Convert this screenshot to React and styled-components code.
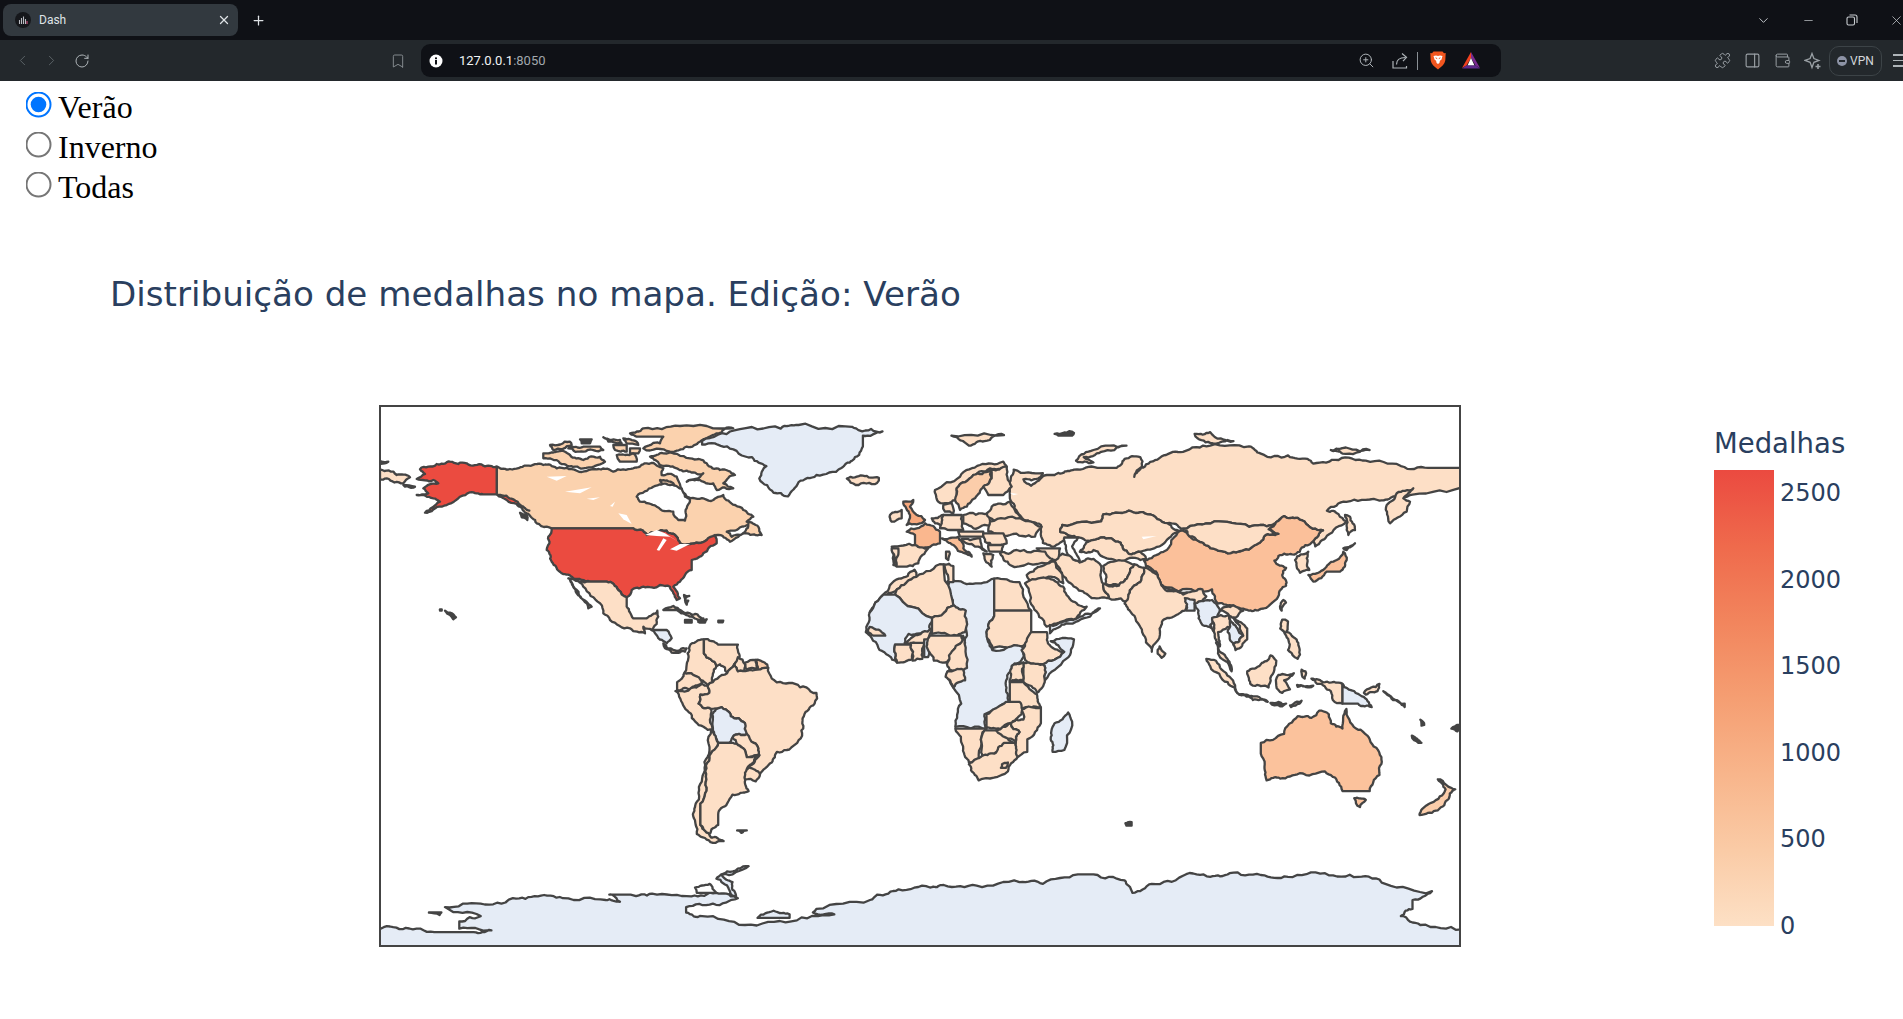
import styled, { createGlobalStyle } from 'styled-components';
import {
  Bookmark,
  ChevronDown,
  ChevronLeft,
  ChevronRight,
  Minus,
  PanelRight,
  Plus,
  Puzzle,
  RotateCw,
  Wallet,
  X,
  ZoomIn,
} from 'lucide-react';

const GlobalStyle = createGlobalStyle`
  html, body {
    margin: 0;
    padding: 0;
    background: #fff;
    overflow: hidden;
  }
  body {
    height: 1019px;
  }
`;

/* ---------- browser chrome ---------- */

const TabStrip = styled.div`
  display: flex;
  align-items: center;
  height: 40px;
  padding: 0 0 0 3px;
  background: #0f1116;
  color: #dfe3e6;
  overflow: hidden;
`;

const Tab = styled.div`
  display: flex;
  align-items: center;
  width: 235px;
  height: 32px;
  box-sizing: border-box;
  padding: 0 7px 0 12px;
  border-radius: 8px;
  background: #32393f;
  font: 12px Roboto, 'Liberation Sans', sans-serif;
`;

const TabTitle = styled.span`
  flex: 1;
  margin-left: 8px;
`;

const NewTab = styled.div`
  display: flex;
  margin-left: 13px;
`;

const WindowControls = styled.div`
  display: flex;
  align-items: center;
  gap: 31px;
  margin: 0 -1px 0 auto;
  color: #c8ccd0;
`;

const Toolbar = styled.div`
  display: flex;
  align-items: center;
  height: 41px;
  padding: 0 0 0 14px;
  background: #23282c;
  color: #aeb4b8;
  overflow: hidden;
`;

const NavGroup = styled.div`
  display: flex;
  flex: none;
  align-items: center;
  gap: 12px;
  width: 376px;
  color: #5f666b;
`;

const Reload = styled.span`
  display: flex;
  margin-left: 2px;
  color: #aeb4b8;
`;

const BookmarkSlot = styled.div`
  display: flex;
  flex: none;
  width: 31px;
  color: #8a9095;
`;

const UrlBar = styled.div`
  display: flex;
  flex: none;
  align-items: center;
  width: 1080px;
  height: 33px;
  box-sizing: border-box;
  padding: 0 21px 0 8px;
  border-radius: 9px;
  background: #0f1116;
  font: 13px Roboto, 'Liberation Sans', sans-serif;
`;

const UrlHost = styled.span`
  margin-left: 16px;
  color: #f2f4f5;
`;

const UrlPort = styled.span`
  color: #a2a8ad;
`;

const UrlActions = styled.div`
  display: flex;
  align-items: center;
  gap: 16px;
  margin-left: auto;
  color: #aeb4b8;
`;

const Divider = styled.span`
  width: 1px;
  height: 18px;
  margin: 0 -4px 0 -8px;
  background: #8a9095;
`;

const Extensions = styled.div`
  display: flex;
  flex: none;
  align-items: center;
  gap: 13px;
  margin-left: 213px;
  color: #9aa0a5;
`;

const VpnPill = styled.div`
  display: flex;
  align-items: center;
  gap: 3px;
  width: 53px;
  height: 30px;
  box-sizing: border-box;
  margin-left: -6px;
  padding-left: 7px;
  border: 1px solid #3c4347;
  border-radius: 10px;
  color: #d3d7da;
  font: 12px Roboto, 'Liberation Sans', sans-serif;
`;

const VpnDot = styled.span`
  position: relative;
  width: 10px;
  height: 10px;
  border-radius: 50%;
  background: #8d93a6;
  &::after {
    content: '';
    position: absolute;
    left: 2px;
    right: 2px;
    top: 4px;
    height: 2px;
    background: #23282c;
  }
`;

const Burger = styled.div`
  display: flex;
  flex-direction: column;
  gap: 4px;
  width: 14px;
  margin-left: -2px;
  span {
    height: 1.5px;
    background: #aeb4b8;
  }
`;

const DashIcon = () => (
  <svg width="16" height="16" viewBox="0 0 16 16">
    <circle cx="8" cy="8" r="8" fill="#15171b" />
    <path d="M4.5 8v4M6.5 6v6M8.5 4.5V12M10.5 7v5" stroke="#b9bcc2" strokeWidth="1.1" />
    <path d="M12 9v3" stroke="#d0517c" strokeWidth="1.1" />
  </svg>
);

const InfoIcon = () => (
  <svg width="14" height="14" viewBox="0 0 14 14">
    <circle cx="7" cy="7" r="6.5" fill="#fff" />
    <rect x="6" y="6" width="2" height="4.5" fill="#0f1116" />
    <rect x="6" y="3.4" width="2" height="1.8" fill="#0f1116" />
  </svg>
);

const ShareIcon = () => (
  <svg width="18" height="18" viewBox="0 0 18 18" fill="none" stroke="currentColor" strokeWidth="1.2">
    <path d="M2 9v7h13.5v-2" />
    <path d="M5.5 12.5c0-5 3-7 9-7" />
    <path d="M11 1.5l4.5 3.8-3.5 3.9" />
  </svg>
);

const BraveIcon = () => (
  <svg width="16" height="19" viewBox="0 0 16 19">
    <path d="M3.5 0.5h9l1.5 1.7 1.7-.3-.4 7.4c-.4 3.6-4.2 7-7.3 9.2-3.1-2.2-6.9-5.6-7.3-9.2L.3 1.9l1.7.3z" fill="#f1561f" />
    <path d="M3.5 5l2.5-.6 2 .6 2-.6 2.5.6-1 3.4-1.6 1.4-.5 2.2-1.4 1-1.4-1-.5-2.2-1.6-1.4z" fill="#fff" />
    <path d="M5.6 6.8l1.6.8M10.4 6.8l-1.6.8" stroke="#f1561f" strokeWidth="1" />
  </svg>
);

const BatIcon = () => (
  <svg width="18" height="17" viewBox="0 0 18 17">
    <path d="M9 0L0 16l4.5-2.6L9 6z" fill="#f1411f" />
    <path d="M9 0l9 16-4.5-2.6L9 6z" fill="#7a2b8f" />
    <path d="M0 16.5h18l-4.5-3.2h-9z" fill="#5f2a8c" />
    <path d="M9 6l-3.4 7.3h6.8z" fill="#fff" />
  </svg>
);

const SparkIcon = () => (
  <svg width="18" height="18" viewBox="0 0 18 18" fill="none" stroke="currentColor" strokeWidth="1.3">
    <path d="M8 1.5l1.9 5 5 1.9-5 1.9L8 15.5l-1.9-5.2-5-1.9 5-1.9z" />
    <path d="M14 12v5M11.5 14.5h5" strokeWidth="1.6" />
  </svg>
);

const BrowserChrome = () => (
  <header>
    <TabStrip>
      <Tab>
        <DashIcon />
        <TabTitle>Dash</TabTitle>
        <X size={14} strokeWidth={2.2} />
      </Tab>
      <NewTab>
        <Plus size={15} strokeWidth={2} />
      </NewTab>
      <WindowControls>
        <ChevronDown size={15} strokeWidth={1.5} />
        <Minus size={13} strokeWidth={1.3} />
        <svg width="12" height="12" viewBox="0 0 12 12" fill="none" stroke="currentColor" strokeWidth="1.1">
          <rect x="1" y="3" width="7.5" height="8" rx="1.5" />
          <path d="M3.5 1h5.5a2 2 0 0 1 2 2v6" />
        </svg>
        <X size={15} strokeWidth={1.2} />
      </WindowControls>
    </TabStrip>
    <Toolbar>
      <NavGroup>
        <ChevronLeft size={17} strokeWidth={1.3} />
        <ChevronRight size={17} strokeWidth={1.3} />
        <Reload>
          <RotateCw size={16} strokeWidth={1.5} />
        </Reload>
      </NavGroup>
      <BookmarkSlot>
        <Bookmark size={16} strokeWidth={1.4} />
      </BookmarkSlot>
      <UrlBar>
        <InfoIcon />
        <UrlHost>127.0.0.1</UrlHost>
        <UrlPort>:8050</UrlPort>
        <UrlActions>
          <ZoomIn size={17} strokeWidth={1.4} />
          <ShareIcon />
          <Divider />
          <BraveIcon />
          <BatIcon />
        </UrlActions>
      </UrlBar>
      <Extensions>
        <Puzzle size={17} strokeWidth={1.4} />
        <PanelRight size={17} strokeWidth={1.6} />
        <Wallet size={17} strokeWidth={1.4} />
        <SparkIcon />
        <VpnPill>
          <VpnDot />
          VPN
        </VpnPill>
        <Burger>
          <span />
          <span />
          <span />
        </Burger>
      </Extensions>
    </Toolbar>
  </header>
);

/* ---------- radio list ---------- */

const RadioList = styled.div`
  display: flex;
  flex-direction: column;
  padding: 6px 0 0 25px;
`;

const RadioRow = styled.label`
  display: flex;
  align-items: center;
  height: 40px;
  color: #000;
  font: 32px 'Liberation Serif', 'Times New Roman', serif;
`;

const RadioInput = styled.input`
  width: 13px;
  height: 13px;
  margin: -5px 13.5px 0 6.5px;
  transform: scale(2);
`;

/* ---------- map ---------- */

const NONE = '#e5ecf6';
const BASE = '#fddfc6';
const CANADA = '#fbd2ae';
const USA = '#eb4b40';
const CHINA = '#fbc09a';
const AUS = '#fbc29c';
const FRANCE = '#fab78e';
const UK = '#f7a87d';
const SWEDEN = '#fbcdaa';
const ITALY = '#f9bd96';

// the outlines were traced from crops of different scale
const frames = {
  w: [370, 400, 2.8, 2.8],
  e: [860, 400, 2.57, 2.8],
  na: [370, 400, 3, 3],
  eu: [860, 420, 3, 3],
  as: [1200, 420, 3, 3],
};

const noise = (x, y) => {
  const s = Math.sin(x * 12.9898 + y * 78.233) * 43758.5453;
  return s - Math.floor(s);
};

// coastlines are traced coarsely, so break up long edges the same way on both
// countries sharing them; ruler-straight borders (dx or dy = 0) stay straight
const roughen = (a, b, depth = 3) => {
  const len = Math.hypot(b[0] - a[0], b[1] - a[1]);
  if (depth === 0 || len < 3 || a[0] === b[0] || a[1] === b[1]) return [];
  const [p, q] = a[0] < b[0] || (a[0] === b[0] && a[1] < b[1]) ? [a, b] : [b, a];
  const mx = (p[0] + q[0]) / 2;
  const my = (p[1] + q[1]) / 2;
  const amp = Math.min(len * 0.16, 2.2) * (noise(mx, my) - 0.5) * 2;
  const m = [mx - ((q[1] - p[1]) / len) * amp, my + ((q[0] - p[0]) / len) * amp];
  return [...roughen(a, m, depth - 1), m, ...roughen(m, b, depth - 1)];
};

const toPage = (frame, pts) => {
  const [ox, oy, sx, sy] = frames[frame];
  return pts
    .trim()
    .split(/\s+/)
    .map((p) => {
      const [x, y] = p.split(',').map(Number);
      return [ox + x / sx, oy + y / sy];
    });
};

const toPoints = (list) =>
  list
    .flatMap((p, i) => [p, ...roughen(p, list[(i + 1) % list.length])])
    .map(([x, y]) => `${x.toFixed(1)},${y.toFixed(1)}`)
    .join(' ');

const project = (frame, pts) => toPoints(toPage(frame, pts));

const antarctica = toPoints([
  ...toPage('w', '30,1480 100,1478 180,1490 290,1490 340,1485 250,1480 250,1460 310,1445 210,1420 310,1410 400,1395 470,1390 540,1395 660,1400 700,1405 670,1385 730,1385 790,1382 900,1390 970,1380 1025,1390 1015,1350 985,1330 1060,1305 1000,1320 970,1340 1005,1370 1030,1395 960,1410 885,1420 885,1435 930,1445 1050,1470 1180,1460 1300,1440 1240,1435 1250,1425 1400,1400 1420,1385 1480,1370 1568,1365'),
  ...toPage('e', '215,1358 300,1360 410,1350 470,1355 560,1328 600,1328 680,1345 690,1360 700,1380 750,1355 830,1332 900,1335 950,1325 1030,1330 1100,1335 1195,1325 1280,1335 1350,1355 1470,1375 1420,1400 1420,1425 1390,1445 1440,1470 1545,1483 1560,1560'),
  ...toPage('w', '20,1560 20,1480'),
]);

const countries = [
  // North America
  ['na', CANADA, '380,200 420,207 470,197 520,195 560,205 620,212 680,208 730,215 790,205 830,190 880,205 875,225 920,230 950,290 975,295 1030,300 1060,285 1095,315 1120,330 1150,350 1130,365 1165,380 1175,405 1130,400 1080,425 1040,405 1010,420 960,432 930,430 920,410 890,392 830,405 790,385 545,385 530,380 500,370 470,340 440,310 380,283'],
  ['na', USA, '380,200 340,197 290,190 240,185 200,192 150,208 165,222 140,237 190,240 205,250 160,265 175,280 140,285 190,295 210,305 165,338 215,320 270,290 300,277 340,283 380,283'],
  ['na', USA, '385,285 430,298 478,332 440,312 410,300'],
  ['na', USA, '545,385 790,385 830,405 890,392 920,410 930,430 960,432 1010,420 1035,405 1040,430 1000,460 965,480 965,510 930,545 910,560 930,595 920,600 900,560 870,555 820,560 785,570 770,592 745,570 710,545 660,545 610,535 575,520 545,485 530,450 535,410'],
  ['na', BASE, '595,535 660,545 710,545 745,570 770,592 770,620 790,655 830,655 862,632 865,650 845,690 820,680 825,700 780,685 720,660 700,640 690,610 640,560 615,540'],
  ['na', BASE, '600,540 630,590 665,620 655,625 620,580'],
  ['na', NONE, '845,690 890,690 905,715 890,730 855,700'],
  ['na', BASE, '880,730 910,750 950,745 945,755 905,758 885,745'],
  ['na', BASE, '880,630 910,618 960,640 1000,655 960,650 920,630'],
  ['na', '#444', '945,660 965,660 965,668 945,668'],
  ['na', '#444', '985,660 1010,658 1005,668 985,666'],
  ['na', '#444', '1045,662 1060,662 1058,667 1045,667'],
  ['na', '#444', '210,628 215,628 215,632 210,632'],
  ['na', '#444', '225,632 240,638 258,652 250,658 240,645'],
  ['na', '#444', '942,585 958,588 945,596'],
  ['na', '#444', '945,600 955,602 950,614'],
  ['na', '#444', '450,338 470,345 472,360 455,352'],
  ['na', CANADA, '520,160 560,155 600,165 640,180 690,170 705,185 640,205 615,200 570,190 520,175'],
  ['na', CANADA, '540,135 600,125 605,135 550,150'],
  ['na', CANADA, '595,145 640,140 690,140 700,150 640,155'],
  ['na', '#444', '630,118 665,118 660,130 635,130'],
  ['na', CANADA, '700,112 750,120 755,130 715,125'],
  ['na', CANADA, '760,115 800,125 805,135 770,130'],
  ['na', CANADA, '730,135 770,135 770,155 735,150'],
  ['na', CANADA, '780,145 810,145 805,160 780,160'],
  ['na', CANADA, '740,165 790,160 800,185 750,185'],
  ['na', CANADA, '840,170 880,160 960,175 1010,190 1050,210 1095,225 1060,250 1090,265 1040,270 1030,250 990,240 950,245 1000,220 960,215 920,205 870,195'],
  ['na', CANADA, '780,100 820,85 930,78 1090,85 1040,100 990,125 950,140 900,155 820,145 870,130 880,110 800,110'],
  ['na', CANADA, '870,240 910,250 920,262 890,268 880,255'],
  ['na', '#fff', '800,290 850,260 900,255 935,265 945,290 960,300 950,325 945,362 925,360 910,335 860,320 810,305'],
  ['na', '#fff', '1070,395 1115,380 1135,372 1110,405 1085,410'],
  ['na', BASE, '30,208 80,225 120,232 100,250 50,235 30,238'],
  ['na', '#444', '30,183 55,185 32,192'],
  ['na', '#444', '100,255 135,260 130,263 105,260'],

  // Greenland, Iceland
  ['w', NONE, '930,115 1020,85 1150,80 1200,70 1350,75 1370,85 1435,88 1380,100 1380,130 1350,170 1320,190 1250,210 1200,230 1170,270 1130,260 1090,220 1110,185 1070,160 1000,130 930,125'],
  ['w', BASE, '1335,220 1380,212 1425,218 1420,232 1360,238'],

  // South America
  ['w', BASE, '895,690 935,670 935,710 970,745 960,790 945,800 905,770 880,765 890,730'],
  ['w', BASE, '935,670 975,685 1030,685 1035,720 1020,740 1000,765 980,740 970,745 935,710'],
  ['w', BASE, '1030,720 1050,740 1045,760 1030,760 1020,740'],
  ['w', BASE, '1050,735 1080,728 1085,750 1055,755'],
  ['w', SWEDEN, '1080,728 1105,735 1115,750 1085,755'],
  ['w', BASE, '860,790 880,765 905,770 930,790 895,810 860,815'],
  ['w', BASE, '855,815 895,810 930,795 945,800 950,820 925,825 920,850 955,865 960,925 910,900 880,860'],
  ['w', BASE, '945,800 960,790 985,770 1000,765 1020,740 1030,760 1085,755 1115,750 1125,780 1190,795 1250,820 1245,850 1215,885 1210,940 1190,965 1140,985 1125,1015 1090,1050 1060,1025 1090,995 1075,960 1050,935 1050,905 1010,885 985,860 955,865 920,850 925,825 950,820'],
  ['w', NONE, '985,860 1010,885 1050,905 1055,935 1015,945 1005,960 975,960 960,925 958,880'],
  ['w', BASE, '1015,945 1055,935 1075,960 1090,995 1055,1000 1045,975'],
  ['w', BASE, '955,925 975,960 950,1010 940,1070 925,1130 925,1190 955,1225 990,1235 960,1240 915,1215 905,1165 915,1125 930,1060 945,1000'],
  ['w', BASE, '975,960 1005,960 1045,975 1055,1000 1085,995 1060,1025 1050,1060 1060,1095 1015,1105 1000,1130 975,1160 975,1190 950,1215 925,1190 925,1130 940,1070 950,1010'],
  ['w', BASE, '1060,1028 1092,1048 1080,1068 1050,1062'],
  ['w', '#444', '1028,1205 1055,1205 1040,1212'],

  // Eurasia
  ['e', BASE, '385,270 385,230 395,195 470,205 440,225 420,222 440,240 480,210 500,210 520,205 550,195 610,190 660,190 680,165 720,160 725,185 705,215 735,180 780,155 830,145 900,128 1000,130 1030,150 1100,155 1150,165 1165,178 1230,168 1300,170 1390,185 1460,190 1560,190 1560,250 1420,265 1370,270 1330,280 1250,285 1200,310 1230,320 1250,340 1200,380 1170,410 1165,395 1190,365 1170,360 1125,330 1090,325 1060,350 1000,355 910,340 830,360 790,345 740,320 690,310 625,320 620,340 520,350 515,370 540,380 500,410 470,400 465,350 420,335 395,290'],
  ['e', CHINA, '730,450 780,425 825,365 870,395 900,415 960,425 1010,410 1040,380 1075,375 1050,360 1090,325 1125,330 1170,360 1190,365 1165,395 1130,425 1090,430 1065,450 1095,470 1085,490 1095,520 1075,550 1030,585 1000,590 960,575 920,570 905,530 860,535 780,525 765,490 735,465'],
  ['e', BASE, '830,360 910,340 1000,355 1060,350 1050,362 1075,375 1040,380 1010,410 960,425 900,415 870,395'],
  ['e', BASE, '515,370 520,350 620,340 625,320 690,310 740,320 790,345 825,365 790,390 770,410 720,425 690,430 670,400 620,385 590,395 560,385 540,380'],
  ['e', BASE, '565,425 590,395 620,385 670,400 690,430 720,425 735,445 680,450 640,445 600,420'],
  ['e', '#fff', '525,385 560,385 545,410 565,450 540,455 530,420'],
  ['e', BASE, '500,445 520,430 565,455 600,445 620,465 625,515 640,555 590,550 555,525 520,490'],
  ['e', BASE, '625,465 680,450 705,460 690,490 665,520 630,515'],
  ['e', BASE, '625,515 665,520 690,490 705,460 730,470 720,510 690,545 700,565 640,555'],
  ['e', BASE, '690,545 720,510 730,470 765,490 780,525 835,540 860,535 880,530 890,550 860,580 840,575 835,590 790,610 770,640 750,705 725,650 700,600 680,570'],
  ['e', BASE, '770,690 785,710 775,722 765,710'],
  ['e', NONE, '775,520 840,540 830,545 790,535'],
  ['e', NONE, '835,555 860,560 860,590 840,590'],
  ['e', NONE, '860,570 905,560 925,590 900,630 910,650 880,630 870,590'],
  ['e', BASE, '905,610 950,605 970,640 945,635 920,650 925,690 910,650'],
  ['e', BASE, '925,590 960,575 985,590 965,610 950,605'],
  ['e', NONE, '950,605 970,640 985,660 960,685 945,650'],
  ['e', BASE, '960,610 995,640 995,670 965,700 960,685 985,660'],
  ['e', BASE, '915,680 940,720 955,760 930,725'],
  ['e', BASE, '890,725 915,730 950,775 975,825 945,790 900,745'],
  ['e', BASE, '975,825 1010,830 1048,845 1010,840'],
  ['e', BASE, '995,760 1030,740 1055,715 1070,730 1065,755 1050,805 1010,800 1000,785'],
  ['e', BASE, '1075,770 1115,765 1090,785 1105,810 1085,820 1070,800'],
  ['e', BASE, '1085,615 1100,620 1095,650 1115,665 1130,700 1125,725 1100,700 1095,660 1080,640'],
  ['e', BASE, '1160,780 1195,790 1240,795 1240,850 1215,840 1210,815 1175,795'],
  ['e', NONE, '1240,795 1270,815 1290,830 1315,860 1280,850 1255,850 1240,850'],
  ['e', BASE, '1295,820 1335,795 1330,815 1300,825'],
  ['e', '#444', '1345,815 1400,850 1400,860 1370,840'],
  ['e', '#444', '1123,798 1165,800 1160,804 1125,803'],
  ['e', BASE, '1135,755 1145,760 1143,780 1137,775'],
  ['e', BASE, '1105,855 1135,842 1130,850 1108,860'],
  ['e', '#444', '1055,848 1095,850 1085,858 1065,855'],
  ['e', '#444', '1418,940 1443,960 1435,960'],
  ['e', '#444', '1440,895 1450,910 1443,912'],
  ['e', '#444', '1520,920 1540,910 1535,928'],
  ['e', AUS, '1030,960 1090,935 1125,885 1160,890 1180,870 1205,880 1210,905 1240,920 1250,865 1275,920 1310,950 1340,1000 1335,1050 1310,1095 1240,1095 1215,1055 1195,1040 1130,1045 1080,1060 1045,1065 1040,1020 1030,990'],
  ['e', AUS, '1270,1115 1300,1120 1285,1140'],
  ['e', SWEDEN, '1485,1062 1530,1090 1510,1120 1480,1150 1438,1162 1445,1145 1490,1110 1505,1090'],
  ['e', '#444', '682,1185 698,1182 698,1192 685,1192'],
  ['e', NONE, '535,875 545,900 525,980 495,985 490,950 500,905'],
  ['e', BASE, '555,170 600,140 685,128 620,145 575,160 600,175'],
  ['e', BASE, '235,100 370,98 320,115 280,128'],
  ['e', '#444', '500,95 550,92 545,100 510,100'],
  ['e', BASE, '860,95 900,90 960,115 900,120'],
  ['e', BASE, '1210,140 1240,135 1310,140 1240,150'],

  // Far east
  ['as', CHINA, '325,465 375,445 410,420 430,395 440,420 420,455 380,455 340,485'],
  ['as', CHINA, '430,385 465,370 440,390'],
  ['as', BASE, '435,285 450,290 465,330 445,345 440,330'],
  ['as', BASE, '285,420 325,395 320,415 328,450 300,458 290,440'],
  ['as', BASE, '250,540 258,548 245,572 240,560'],
  ['as', BASE, '560,255 590,220 640,205 610,235 630,245 620,275 570,310'],

  // Europe and the Middle East
  ['eu', BASE, '225,210 300,170 360,135 430,125 440,140 390,145 340,165 290,205 290,240 250,250 235,245'],
  ['eu', SWEDEN, '290,205 340,165 390,150 395,175 370,200 345,235 320,260 300,270 285,240'],
  ['eu', BASE, '395,150 440,140 455,200 430,225 385,225 370,200 395,175'],
  ['eu', UK, '130,245 160,240 150,260 195,300 180,310 140,315 150,285'],
  ['eu', BASE, '90,285 125,270 125,295 95,305'],
  ['eu', BASE, '250,255 275,250 280,280 255,275'],
  ['eu', BASE, '215,295 250,285 250,320 225,310'],
  ['eu', BASE, '250,285 305,285 310,330 270,330 240,325'],
  ['eu', FRANCE, '140,335 170,325 195,310 240,335 240,370 190,385 165,375 165,345'],
  ['eu', BASE, '95,380 165,375 205,385 175,430 140,440 110,440 100,420'],
  ['eu', BASE, '95,385 115,385 110,435 100,435'],
  ['eu', BASE, '310,285 385,280 395,320 340,325 310,310'],
  ['eu', BASE, '395,260 450,245 480,295 400,300 380,280'],
  ['eu', BASE, '390,305 480,295 545,320 525,350 450,345 385,335'],
  ['eu', BASE, '295,335 370,335 370,350 300,350'],
  ['eu', ITALY, '245,355 295,350 310,385 335,410 315,400 280,375'],
  ['eu', BASE, '300,360 360,355 380,395 345,380'],
  ['eu', BASE, '370,340 430,340 440,370 400,380 375,365'],
  ['eu', BASE, '385,375 430,375 425,395 390,395'],
  ['eu', BASE, '370,400 400,405 395,440 375,420'],
  ['eu', BASE, '258,395 268,395 265,420 258,415'],
  ['eu', BASE, '530,385 600,385 595,415 560,420'],
  ['eu', BASE, '420,400 470,390 555,395 580,420 560,430 450,435'],
  ['eu', BASE, '500,465 540,440 585,425 610,490 565,470 510,495'],
  ['eu', BASE, '495,490 560,475 610,500 640,545 680,560 650,600 590,610 560,620 520,560'],
  ['eu', NONE, '570,615 640,600 660,590 720,565 690,590 620,610 570,640'],

  // Africa
  ['e', NONE, '230,500 290,515 345,500 345,605 325,650 340,700 415,685 420,720 390,745 375,800 385,845 320,880 325,920 245,915 260,850 225,760 270,735 240,690 275,660 270,590 240,575 225,520'],
  ['e', BASE, '345,500 410,510 440,590 345,590'],
  ['e', BASE, '345,590 440,590 440,650 415,690 340,695 325,650 345,605'],
  ['e', BASE, '25,595 60,545 100,500 140,475 145,495 95,530 60,560 35,580'],
  ['e', BASE, '95,530 145,495 215,460 240,575 185,610 90,545'],
  ['e', BASE, '215,460 240,465 240,510 225,510'],
  ['e', NONE, '25,595 60,545 90,545 185,610 180,645 125,655 115,685 90,685 95,735 50,700 15,650'],
  ['e', BASE, '25,635 65,660 35,660 18,650'],
  ['e', BASE, '115,680 160,650 185,640 175,670 160,685'],
  ['e', BASE, '90,685 130,685 135,725 95,735'],
  ['e', BASE, '130,680 165,680 160,725 135,730'],
  ['e', NONE, '165,670 180,670 175,720 165,720'],
  ['e', BASE, '185,610 240,575 272,590 270,650 250,660 185,655'],
  ['e', BASE, '180,660 260,660 270,680 240,700 220,735 190,730 175,700'],
  ['e', BASE, '225,735 240,700 265,660 275,750 230,755'],
  ['e', BASE, '225,760 265,755 270,785 240,805 220,775'],
  ['e', BASE, '415,700 440,650 480,650 490,690 525,705 470,740 430,735'],
  ['e', NONE, '490,675 550,670 530,725 475,785 470,740 525,705'],
  ['e', BASE, '420,735 470,740 475,785 455,820 420,790'],
  ['e', BASE, '390,745 420,735 418,785 385,790'],
  ['e', BASE, '385,790 420,790 455,825 465,860 415,865 385,850'],
  ['e', BASE, '415,865 465,862 465,905 430,950 430,985 400,1000 400,960 410,930 385,905 420,895'],
  ['e', BASE, '325,880 375,845 410,845 415,880 385,905 350,920 325,915'],
  ['e', BASE, '245,920 325,920 315,930 310,1015 280,1015 265,970'],
  ['e', BASE, '320,925 350,925 395,960 370,965 345,990 315,995'],
  ['e', BASE, '350,925 385,905 410,930 400,960'],
  ['e', BASE, '280,1020 310,1000 345,990 370,960 400,960 405,1000 380,1040 305,1065 295,1050'],
  ['e', BASE, '365,1020 380,1015 375,1030 362,1030'],
];

const antarcticIslands = [
  ['w', NONE, '165,1435 200,1435 195,1442'],
  ['w', '#fff', '910,1365 950,1355 970,1380 915,1380'],
  ['w', NONE, '1085,1450 1130,1430 1175,1440 1175,1450'],
];

const lakes = [
  ['na', '530,230 590,228 560,242'],
  ['na', '585,275 665,262 630,280'],
  ['na', '650,296 690,292 670,300'],
  ['na', '745,340 770,345 785,372 760,358'],
  ['na', '825,405 860,390 885,400 925,425 900,410 860,408'],
  ['na', '860,450 880,415 890,420 868,452'],
  ['na', '900,448 930,432 960,432 920,452'],
  ['na', '720,318 735,305 728,320'],
  ['eu', '845,350 890,348 850,358'],
  ['eu', '450,218 475,222 460,226'],
];

const MapFrame = styled.div`
  flex: none;
  width: 1082px;
  height: 542px;
  box-sizing: border-box;
  border: 2px solid #444;
  background: #fff;
`;

const MapSvg = styled.svg`
  display: block;
  width: 100%;
  height: 100%;
  polygon {
    stroke: #444;
    stroke-width: 2.3;
    stroke-linejoin: round;
  }
  polygon.lake {
    stroke: none;
  }
`;

const WorldMap = () => (
  <MapFrame>
    <MapSvg viewBox="381 407 1078 538" preserveAspectRatio="none">
      {countries.map(([frame, fill, pts], i) => (
        <polygon key={i} fill={fill} points={project(frame, pts)} />
      ))}
      <polygon fill={NONE} points={antarctica} />
      {antarcticIslands.map(([frame, fill, pts], i) => (
        <polygon key={i} fill={fill} points={project(frame, pts)} />
      ))}
      {lakes.map(([frame, pts], i) => (
        <polygon key={i} className="lake" fill="#fff" points={toPage(frame, pts).join(' ')} />
      ))}
    </MapSvg>
  </MapFrame>
);

/* ---------- figure ---------- */

const Figure = styled.section`
  display: flex;
  flex-direction: column;
  font-family: 'DejaVu Sans', Verdana, sans-serif;
  color: #2a3f5f;
`;

const FigureTitle = styled.h1`
  margin: 67px 0 0 110px;
  font-size: 34.15px;
  font-weight: 400;
  line-height: 40px;
`;

const PlotRow = styled.div`
  display: flex;
  align-items: flex-start;
  margin: 91px 0 0 379px;
`;

const ColorBar = styled.div`
  display: flex;
  flex-direction: column;
  margin-left: 253px;
  padding-top: 23px;
`;

const ColorBarTitle = styled.div`
  font-size: 27.5px;
  line-height: 30px;
`;

const ColorBarBody = styled.div`
  display: flex;
  align-items: flex-start;
  gap: 6px;
  margin-top: 12px;
`;

const ColorRamp = styled.div`
  width: 60px;
  height: 456px;
  background: linear-gradient(
    to top,
    #fde0c5,
    #facba6 16.6%,
    #f8b58b 33.3%,
    #f59e72 50%,
    #f2855d 66.6%,
    #ef6a4c 83.3%,
    #eb4a40
  );
`;

const Ticks = styled.div`
  display: flex;
  flex-direction: column;
  justify-content: space-between;
  height: 463px;
  margin-top: 8px;
  font-size: 24px;
  line-height: 30px;
`;

const App = () => (
  <>
    <GlobalStyle />
    <BrowserChrome />
    <RadioList>
      <RadioRow>
        <RadioInput type="radio" name="edicao" defaultChecked />
        Verão
      </RadioRow>
      <RadioRow>
        <RadioInput type="radio" name="edicao" />
        Inverno
      </RadioRow>
      <RadioRow>
        <RadioInput type="radio" name="edicao" />
        Todas
      </RadioRow>
    </RadioList>
    <Figure>
      <FigureTitle>Distribuição de medalhas no mapa. Edição: Verão</FigureTitle>
      <PlotRow>
        <WorldMap />
        <ColorBar>
          <ColorBarTitle>Medalhas</ColorBarTitle>
          <ColorBarBody>
            <ColorRamp />
            <Ticks>
              {[2500, 2000, 1500, 1000, 500, 0].map((t) => (
                <span key={t}>{t}</span>
              ))}
            </Ticks>
          </ColorBarBody>
        </ColorBar>
      </PlotRow>
    </Figure>
  </>
);

export default App;
